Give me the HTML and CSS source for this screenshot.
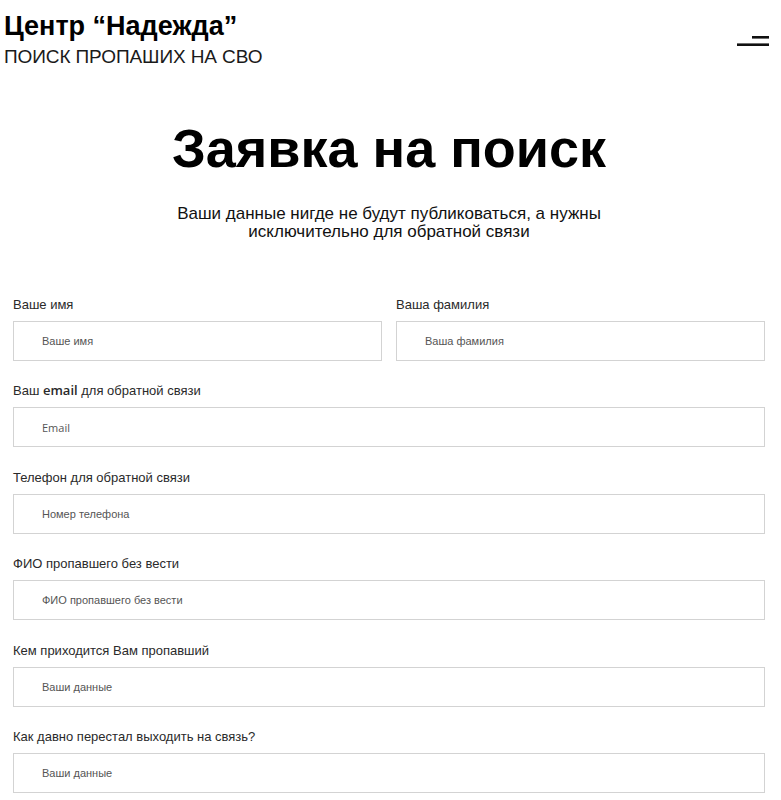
FILE: index.html
```html
<!DOCTYPE html>
<html lang="ru">
<head>
<meta charset="utf-8">
<title>Заявка на поиск</title>
<link rel="stylesheet" href="styles.css">
</head>
<body>
<header class="header">
  <div class="brand">
    <div class="brand-title">Центр “Надежда”</div>
    <div class="brand-sub">ПОИСК ПРОПАШИХ НА СВО</div>
  </div>
  <button class="burger" aria-label="Меню">
    <svg width="34" height="12" viewBox="0 0 34 12"><rect x="16" y="1" width="17" height="2.6" fill="#111"/><rect x="1" y="8.4" width="32" height="2.6" fill="#111"/></svg>
  </button>
</header>
<main class="main">
  <h1 class="title">Заявка на поиск</h1>
  <p class="lead">Ваши данные нигде не будут публиковаться, а нужны<br>исключительно для обратной связи</p>
  <form class="form">
    <div class="row two">
      <label class="field"><span class="label">Ваше имя</span><input class="input" placeholder="Ваше имя"></label>
      <label class="field"><span class="label">Ваша фамилия</span><input class="input" placeholder="Ваша фамилия"></label>
    </div>
    <label class="field"><span class="label">Ваш <span class="geo">email</span> для обратной связи</span><input class="input geo-ph" placeholder="Email"></label>
    <label class="field"><span class="label">Телефон для обратной связи</span><input class="input" placeholder="Номер телефона"></label>
    <label class="field"><span class="label">ФИО пропавшего без вести</span><input class="input" placeholder="ФИО пропавшего без вести"></label>
    <label class="field"><span class="label">Кем приходится Вам пропавший</span><input class="input" placeholder="Ваши данные"></label>
    <label class="field"><span class="label">Как давно перестал выходить на связь?</span><input class="input" placeholder="Ваши данные"></label>
  </form>
</main>
</body>
</html>
```
FILE: styles.css
```css
* { box-sizing: border-box; }
html, body { margin: 0; padding: 0; background: #fff; }
body { font-family: "Liberation Sans", Arial, sans-serif; color: #111; }

.header {
  display: flex;
  justify-content: space-between;
  align-items: flex-start;
  padding: 10px 11px 0 4px;
}
.brand-title { font-size: 27px; font-weight: 700; line-height: 32px; color: #000; }
.brand-sub { font-size: 19px; line-height: 22px; margin-top: 4px; color: #1a1a1a; letter-spacing: -0.1px; }
.burger {
  border: 0; background: none; padding: 0; margin-top: 25px;
  width: 34px; height: 12px; display: block;
}
.burger svg { display: block; }

.main { padding: 0 16px 0 13px; }
.title {
  margin: 50px 0 0;
  text-align: center;
  font-size: 54px;
  line-height: 60px;
  font-weight: 700;
  color: #000;
}
.lead {
  margin: 27px 0 0;
  text-align: center;
  font-size: 17px;
  line-height: 18px;
  color: #111;
}
.form { margin-top: 56px; display: flex; flex-direction: column; gap: 22.4px; }
.row.two { display: grid; grid-template-columns: 1fr 1fr; gap: 14px; }
.field { display: flex; flex-direction: column; gap: 9px; }
.label { font-size: 13px; line-height: 15px; color: #2a2a2a; }
.geo { font-family: "Open Sans", sans-serif; font-weight: 600; font-size: 13px; }
.input {
  height: 40px;
  border: 1px solid #d3d3d3;
  padding: 0 28px;
  font-family: "Liberation Sans", Arial, sans-serif;
  font-size: 11px;
  background: #fff;
  outline: none;
}
.input::placeholder { color: #555; }
.geo-ph { font-family: "Open Sans", sans-serif; }
```
